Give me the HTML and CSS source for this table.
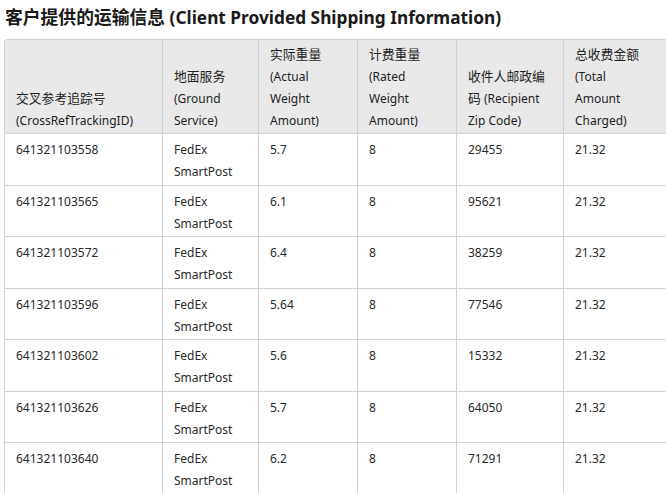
FILE: index.html
```html
<!DOCTYPE html>
<html lang="zh">
<head>
<meta charset="utf-8">
<title>客户提供的运输信息</title>
<link rel="stylesheet" href="styles.css">
</head>
<body>
<h3 class="title"><span class="zh">客户提供的运输信息</span> (Client Provided Shipping Information)</h3>
<div class="wrap">
<table class="data">
<colgroup>
<col class="c1"><col class="c2"><col class="c3"><col class="c4"><col class="c5"><col class="c6">
</colgroup>
<thead>
<tr>
<th><span class="zh">交叉参考追踪号</span> (CrossRefTrackingID)</th>
<th><span class="zh">地面服务</span> (Ground Service)</th>
<th><span class="zh">实际重量</span> (Actual Weight Amount)</th>
<th><span class="zh">计费重量</span> (Rated Weight Amount)</th>
<th><span class="zh">收件人邮政编码</span> (Recipient Zip Code)</th>
<th class="last"><span class="zh">总收费金额</span> (Total Amount Charged)</th>
</tr>
</thead>
<tbody>
<tr><td>641321103558</td><td>FedEx SmartPost</td><td>5.7</td><td>8</td><td>29455</td><td class="last">21.32</td></tr>
<tr><td>641321103565</td><td>FedEx SmartPost</td><td>6.1</td><td>8</td><td>95621</td><td class="last">21.32</td></tr>
<tr><td>641321103572</td><td>FedEx SmartPost</td><td>6.4</td><td>8</td><td>38259</td><td class="last">21.32</td></tr>
<tr><td>641321103596</td><td>FedEx SmartPost</td><td>5.64</td><td>8</td><td>77546</td><td class="last">21.32</td></tr>
<tr><td>641321103602</td><td>FedEx SmartPost</td><td>5.6</td><td>8</td><td>15332</td><td class="last">21.32</td></tr>
<tr><td>641321103626</td><td>FedEx SmartPost</td><td>5.7</td><td>8</td><td>64050</td><td class="last">21.32</td></tr>
<tr><td>641321103640</td><td>FedEx SmartPost</td><td>6.2</td><td>8</td><td>71291</td><td class="last">21.32</td></tr>
</tbody>
</table>
</div>
</body>
</html>
```
FILE: styles.css
```css
html, body {
  margin: 0;
  padding: 0;
  background: #ffffff;
  overflow: hidden;
}
body {
  padding: 0 0 0 4px;
  font-family: "Noto Sans", "Noto Sans CJK SC", sans-serif;
  color: #2a2a2a;
}
.title {
  margin: 0;
  padding: 7px 0 0 1px;
  height: 32px;
  box-sizing: border-box;
  font-size: 17.3px;
  line-height: 22px;
  font-weight: 700;
  color: #1a1a1a;
}
.title .zh {
  font-size: 17.8px;
  line-height: 0;
}
.wrap {
  width: 700px;
}
.data {
  border-collapse: separate;
  border-spacing: 0;
  table-layout: fixed;
  width: 669px;
  font-size: 12px;
  line-height: 22px;
  border-top: 1px solid #d2d2d2;
  border-left: 1px solid #d2d2d2;
  border-top-left-radius: 4px;
  margin-top: 7px;
}
.data .zh {
  font-size: 12.8px;
  line-height: 0;
}
.c1 { width: 158px; }
.c2 { width: 96px; }
.c3 { width: 99px; }
.c4 { width: 99px; }
.c5 { width: 107px; }
.c6 { width: 110px; }
.data th, .data td {
  text-align: left;
  font-weight: 400;
  padding: 5px 10px 1.5px 11px;
  border-right: 1px solid #d2d2d2;
  border-bottom: 1px solid #d2d2d2;
}
.data .last {
  padding-right: 30px;
}
.data th {
  background: #e9e9e9;
  vertical-align: bottom;
  color: #1e1e1e;
  padding-top: 4px;
  padding-bottom: 1px;
}
.data th:first-child {
  border-top-left-radius: 4px;
}
.data td {
  vertical-align: top;
}
```
